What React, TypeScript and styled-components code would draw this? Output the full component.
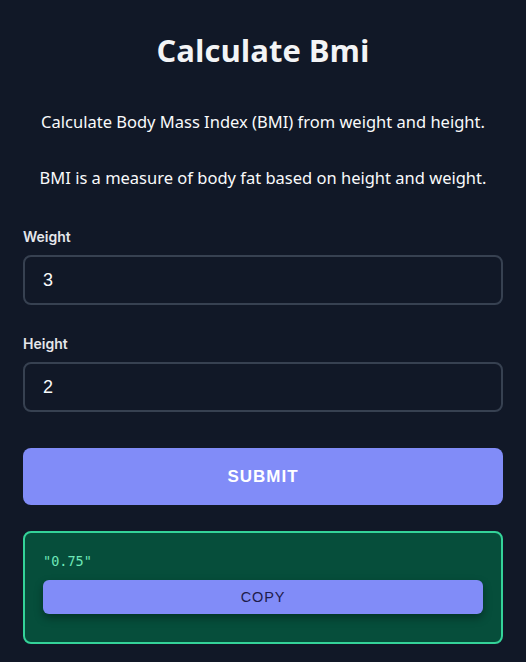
import React from "react";
import styled, { createGlobalStyle } from "styled-components";

const Global = createGlobalStyle`
  html, body { margin: 0; padding: 0; background: #111827; }
  body { font-family: "Open Sans", "Noto Sans", sans-serif; color: #f9fafb; }
  * { box-sizing: border-box; }
`;

const Page = styled.main`
  width: 480px;
  margin: 0 auto;
  padding: 28px 0 20px;
  display: flex;
  flex-direction: column;
`;

const Title = styled.h1`
  margin: 0;
  text-align: center;
  font-family: "Open Sans", "Noto Sans", sans-serif;
  font-size: 31px;
  font-weight: 700;
  line-height: 44px;
  color: #f3f4f6;
`;

const Desc = styled.p<{ $top: number }>`
  margin: ${(p) => p.$top}px 0 0;
  text-align: center;
  font-family: "Noto Sans", "Open Sans", sans-serif;
  font-size: 16.5px;
  line-height: 24px;
  color: #f9fafb;
`;

const Form = styled.form`
  margin-top: 37px;
  display: flex;
  flex-direction: column;
`;

const Field = styled.div`
  display: flex;
  flex-direction: column;
  gap: 8px;
  margin-bottom: 29px;
`;

const Label = styled.label`
  font-family: Inter, Roboto, sans-serif;
  font-size: 14px;
  font-weight: 600;
  line-height: 20px;
  color: #e5e7eb;
`;

const Input = styled.input`
  height: 50px;
  width: 100%;
  background: #111827;
  border: 2px solid #374151;
  border-radius: 8px;
  padding: 0 18px;
  font-family: "Liberation Sans", Arial, sans-serif;
  font-size: 18px;
  color: #f9fafb;
  outline: none;
`;

const SubmitButton = styled.button`
  margin-top: 7px;
  height: 57px;
  width: 100%;
  border: none;
  border-radius: 8px;
  background: #818cf8;
  color: #ffffff;
  font-family: "Liberation Sans", Arial, sans-serif;
  font-size: 17px;
  font-weight: 700;
  letter-spacing: 1px;
  text-transform: uppercase;
  cursor: pointer;
`;

const Result = styled.section`
  margin-top: 26px;
  border: 2px solid #34d399;
  border-radius: 8px;
  background: #064e3b;
  padding: 18px 18px 28px;
  display: flex;
  flex-direction: column;
  gap: 9px;
`;

const Value = styled.code`
  font-family: "DejaVu Sans Mono", "Liberation Mono", monospace;
  font-size: 13.5px;
  line-height: 20px;
  color: #6ee7b7;
`;

const CopyButton = styled.button`
  height: 34px;
  width: 100%;
  border: none;
  border-radius: 6px;
  background: #818cf8;
  color: #1e1b4b;
  font-family: "Liberation Sans", Arial, sans-serif;
  font-size: 14.5px;
  letter-spacing: 0.8px;
  box-shadow: 0 4px 8px rgba(0, 0, 0, 0.35);
  cursor: pointer;
`;

export default function App() {
  return (
    <>
      <Global />
      <Page>
        <Title>Calculate Bmi</Title>
        <Desc $top={38}>Calculate Body Mass Index (BMI) from weight and height.</Desc>
        <Desc $top={32}>BMI is a measure of body fat based on height and weight.</Desc>
        <Form onSubmit={(e) => e.preventDefault()}>
          <Field>
            <Label>Weight</Label>
            <Input defaultValue="3" />
          </Field>
          <Field>
            <Label>Height</Label>
            <Input defaultValue="2" />
          </Field>
          <SubmitButton type="submit">Submit</SubmitButton>
        </Form>
        <Result>
          <Value>"0.75"</Value>
          <CopyButton>COPY</CopyButton>
        </Result>
      </Page>
    </>
  );
}
